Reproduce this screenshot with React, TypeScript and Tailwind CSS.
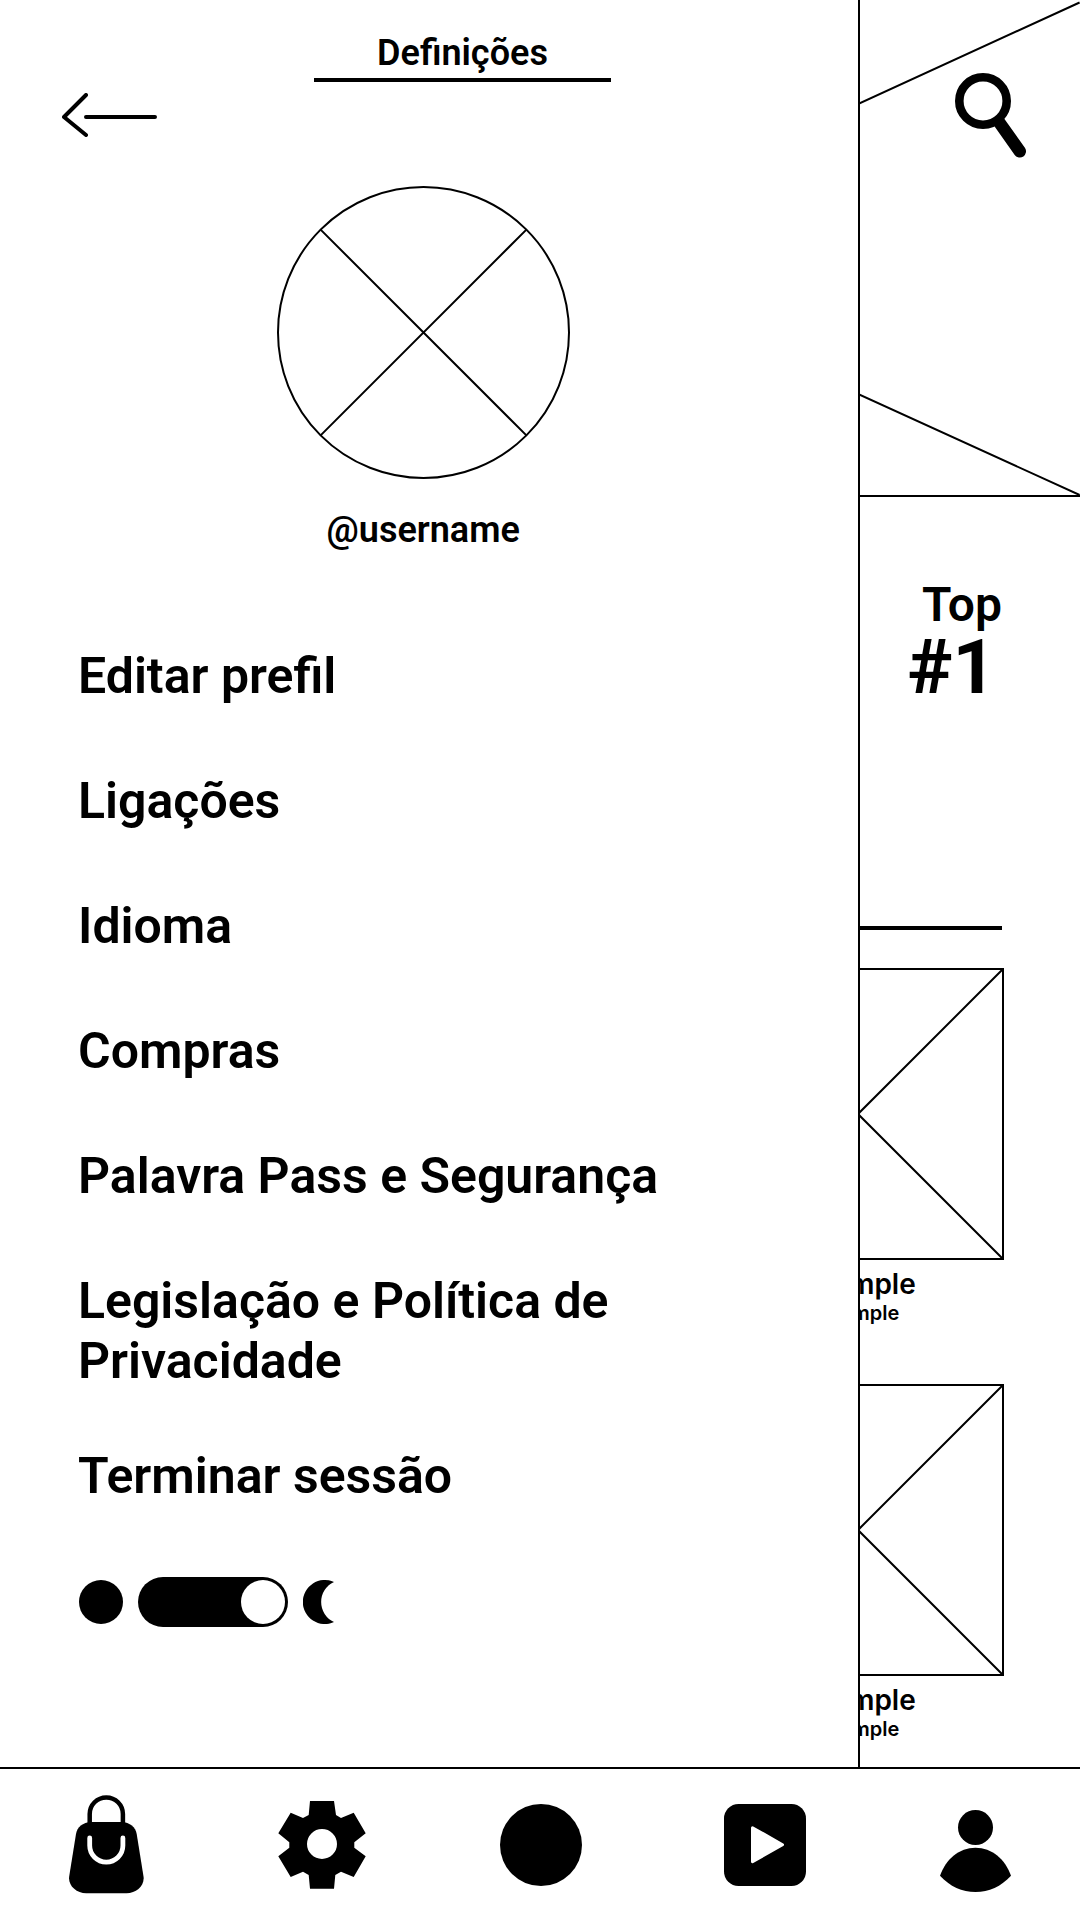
import React from "react";

const menuItems = [
  "Editar prefil",
  "Ligações",
  "Idioma",
  "Compras",
  "Palavra Pass e Segurança",
  "Legislação e Política de Privacidade",
];

function BackArrow() {
  return (
    <svg width="95" height="44" viewBox="0 0 95 44" fill="none" stroke="black" strokeWidth="4" strokeLinecap="round" strokeLinejoin="round">
      <path d="M24 2 2 24l22 18M24 24h69" />
    </svg>
  );
}

function AvatarPlaceholder() {
  return (
    <svg width="293" height="293" viewBox="0 0 293 293" fill="none" stroke="black" strokeWidth="2" role="img" aria-label="Avatar">
      <circle cx="146.5" cy="146.5" r="145.5" />
      <path d="M43.6 43.6l205.8 205.8M249.4 43.6 43.6 249.4" />
    </svg>
  );
}

function SearchIcon() {
  return (
    <svg width="72" height="85" viewBox="0 0 72 85" fill="none" stroke="black">
      <circle cx="28" cy="28" r="23.7" strokeWidth="8.6" />
      <path d="M44 49 64.8 78.300" strokeWidth="12.500" strokeLinecap="round" />
    </svg>
  );
}

function BagIcon() {
  return (
    <svg width="75" height="99" viewBox="0 0 75 99" fill="none">
      <path d="M20.700 30V19a16.600 16.600 0 0 1 33.200 0v11" stroke="black" strokeWidth="4.500" />
      <path d="M22.500 27H52.500C61 27.500 66.500 32 67.700 39L74.600 82C75.500 91 67 98.300 57.500 98.300H17.200C7.500 98.300-.8 91 .1 82L7 39C8.200 32 13.500 27.500 22.500 27Z" fill="black" />
      <path d="M20.700 43v7.500a16.600 16.600 0 0 0 33.200 0V43" stroke="white" strokeWidth="4.800" strokeLinecap="round" />
    </svg>
  );
}

function GearIcon() {
  return (
    <svg width="88" height="88" viewBox="0 0 88 88">
      <path
        fillRule="evenodd"
        d="M32 0H56L58 14L63 17L75.700 11.700L87.700 32.300L76.300 41.300V46.700L87.700 55.300L75.700 76L63 70.700L57.300 74L56 87.700H32L30.700 74L25 70.700L12.700 76L.3 55.300L11.300 46.700V41.300L.3 32.300L12.700 11.700L25 17L30.700 14ZM44 28a15 15 0 1 0 0 30a15 15 0 1 0 0-30Z"
      />
    </svg>
  );
}

function HomeIcon() {
  return (
    <svg width="82" height="82" viewBox="0 0 82 82">
      <circle cx="41" cy="41" r="41" />
    </svg>
  );
}

function PlayIcon() {
  return (
    <svg width="82" height="82" viewBox="0 0 82 82">
      <rect width="82" height="82" rx="14.500" />
      <path d="M28.500 23.700 58.500 40.700 28.500 57.700Z" fill="white" stroke="white" strokeWidth="3" strokeLinejoin="round" />
    </svg>
  );
}

function PersonIcon() {
  return (
    <svg width="71" height="95" viewBox="0 0 71 95">
      <circle cx="35.500" cy="30.500" r="17.500" />
      <path d="M0 78.700C6 62 19 50.700 35.500 50.700S65 62 71 78.700C61 89.500 49 95 35.500 95S10 89.500 0 78.700Z" />
    </svg>
  );
}

function MoonIcon() {
  return (
    <svg width="31" height="44" viewBox="0 0 31 44" aria-hidden="true">
      <path d="M31 2A22 22 0 1 0 31 42A22 22 0 0 1 31 2Z" />
    </svg>
  );
}

function Drawer() {
  return (
    <aside className="min-w-0 flex-[43] border-r-2 border-black">
      <header className="flex items-start pl-[62px]">
        <button type="button" aria-label="Voltar" className="mt-[93px] shrink-0">
          <BackArrow />
        </button>
        <h1 className="mt-[29px] ml-[157px] w-[297px] border-b-4 border-black text-center text-[36px] leading-[49px] font-semibold">
          Definições
        </h1>
      </header>
      <section className="mt-[49px] flex flex-col items-center pr-3">
        <AvatarPlaceholder />
        <p className="mt-[31px] text-[36px] leading-[40px] font-semibold">@username</p>
      </section>
      <nav aria-label="Definições" className="mt-24 flex flex-col items-start gap-[65px] pr-24 pl-[78px] text-[50px] leading-[60px] font-semibold">
        {menuItems.map((item) => (
          <a key={item} href="#">
            {item}
          </a>
        ))}
        <a href="#" className="-mt-2.5">
          Terminar sessão
        </a>
      </nav>
      <label className="mt-[71px] ml-[79px] flex w-fit items-center gap-[15px]">
        <span className="size-11 rounded-full bg-black" />
        <input
          type="checkbox"
          role="switch"
          defaultChecked
          aria-label="Modo escuro"
          className="flex h-[50px] w-[150px] appearance-none justify-start rounded-full bg-black p-[3px] before:size-11 before:rounded-full before:bg-white checked:justify-end"
        />
        <MoonIcon />
      </label>
    </aside>
  );
}

function ExampleCard() {
  return (
    <article className="flex w-[292px] shrink-0 flex-col items-center font-['Inter',sans-serif] font-semibold">
      <svg width="292" height="292" viewBox="0 0 292 292" fill="none" stroke="black" strokeWidth="2">
        <path d="M1 1H291V291H1ZL291 291M291 1 1 291" />
      </svg>
      <h3 className="mt-[7px] text-[28px] leading-[34px]">Example</h3>
      <p className="text-[20px] leading-[24px]">Example</p>
    </article>
  );
}

function Backdrop() {
  return (
    <main className="relative min-w-0 flex-[11] overflow-hidden">
      <div className="border-b-2 border-black">
        <svg className="h-[495px] w-full" viewBox="0 0 220 495" preserveAspectRatio="none" fill="none" stroke="black" strokeWidth="2">
          <path d="M-2 104 220 2.500M-2 394 220 495" />
        </svg>
      </div>
      <button type="button" aria-label="Pesquisar" className="absolute top-[73px] right-[53px]">
        <SearchIcon />
      </button>
      <div className="mt-[82px] mr-[78px] flex flex-col items-end">
        <p className="text-[48px] leading-[52px] font-semibold">Top</p>
        <p className="pr-1.5 text-[76px] leading-[72px] font-bold">#1</p>
      </div>
      <hr className="mt-[223px] mr-[78px] border-t-4 border-black" />
      <div className="mt-[38px] mr-[76px] flex flex-col items-end gap-[59px]">
        <ExampleCard />
        <ExampleCard />
      </div>
    </main>
  );
}

function BottomNav() {
  return (
    <nav aria-label="Principal" className="flex h-[153px] items-center justify-between border-t-2 border-black px-[69px]">
      <button type="button" aria-label="Loja">
        <BagIcon />
      </button>
      <button type="button" aria-label="Definições">
        <GearIcon />
      </button>
      <button type="button" aria-label="Início">
        <HomeIcon />
      </button>
      <button type="button" aria-label="Vídeos" className="pl-2">
        <PlayIcon />
      </button>
      <button type="button" aria-label="Perfil">
        <PersonIcon />
      </button>
    </nav>
  );
}

export default function App() {
  return (
    <div className="flex min-h-screen flex-col bg-white font-['Roboto',sans-serif] text-black">
      <div className="flex flex-1">
        <Drawer />
        <Backdrop />
      </div>
      <BottomNav />
    </div>
  );
}
